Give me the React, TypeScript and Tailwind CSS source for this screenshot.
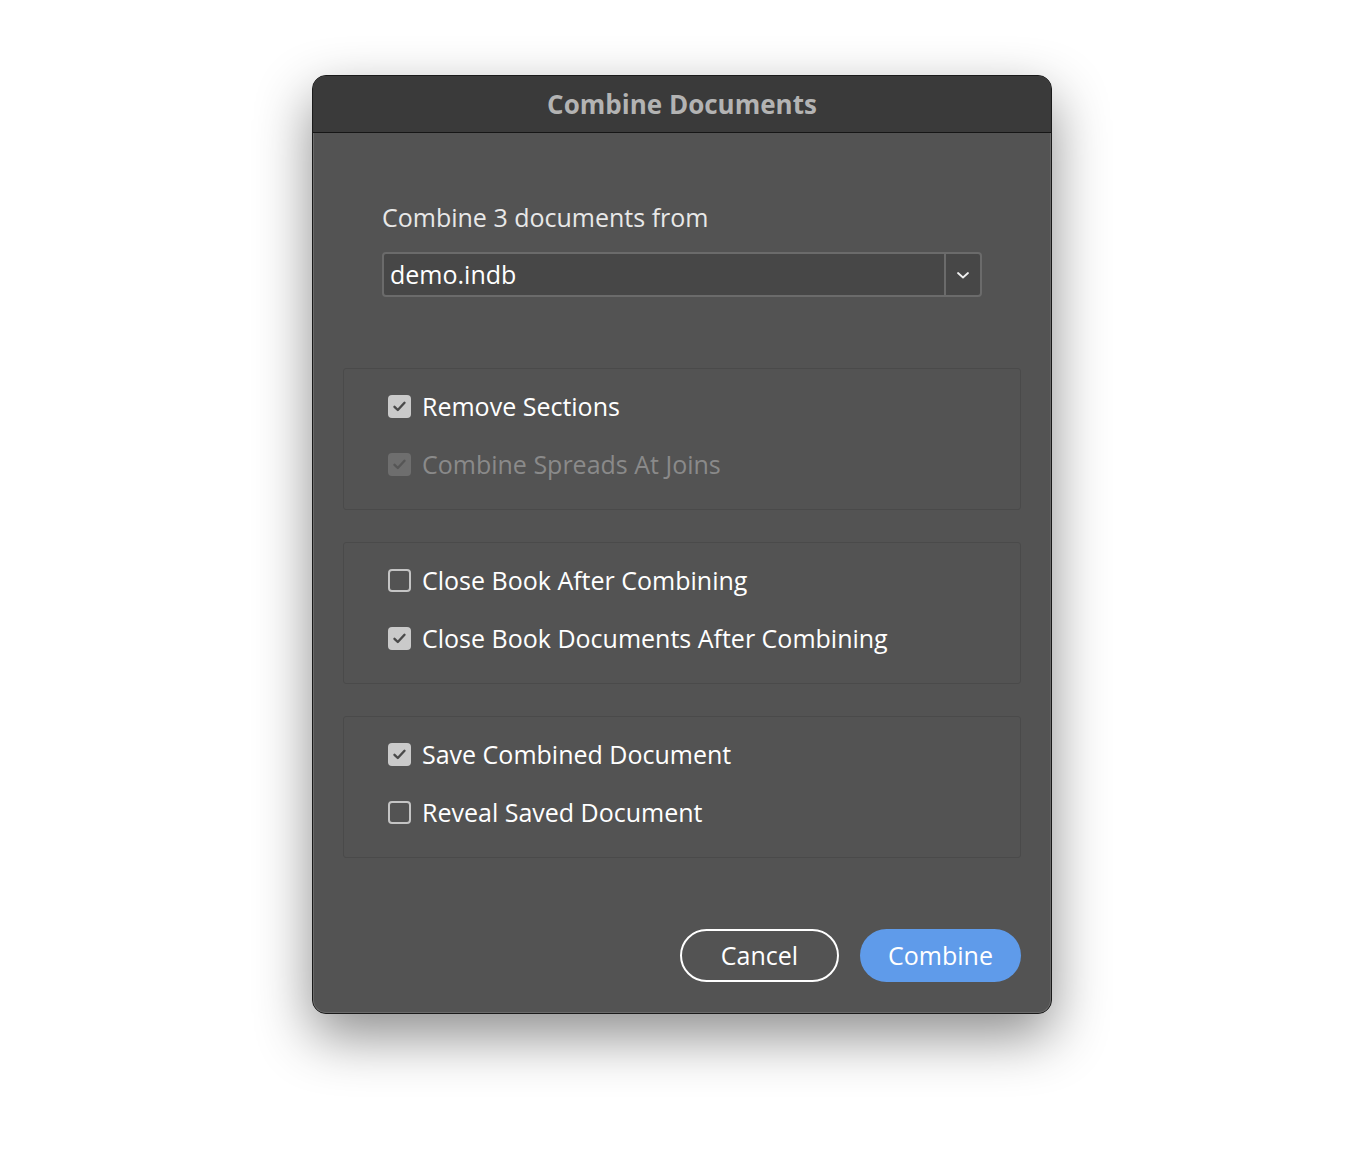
import React from "react";

const font = { fontFamily: '"Open Sans", "Noto Sans", sans-serif' };

function Check({ state }: { state: "on" | "off" | "disabled" }) {
  if (state === "off") {
    return <div className="w-[23px] h-[23px] rounded-[4px] border-2 border-[#c4c4c4] shrink-0" />;
  }
  const bg = state === "on" ? "bg-[#cacaca]" : "bg-[#6e6e6e]";
  const stroke = state === "on" ? "#4a4a4a" : "#565656";
  return (
    <div className={`w-[23px] h-[23px] rounded-[4px] ${bg} flex items-center justify-center shrink-0`}>
      <svg width="15" height="15" viewBox="0 0 15 15">
        <path d="M2.5 7.8 L5.8 11 L12.5 3.8" fill="none" stroke={stroke} strokeWidth="2.4" strokeLinecap="round" strokeLinejoin="round" />
      </svg>
    </div>
  );
}

function Row({ label, state }: { label: string; state: "on" | "off" | "disabled" }) {
  return (
    <div className="h-[30px] flex items-center gap-[11px]">
      <Check state={state} />
      <span className={`text-[25px] leading-[30px] ${state === "disabled" ? "text-[#8a8a8a]" : "text-white"}`}>{label}</span>
    </div>
  );
}

function Group({ children }: { children: React.ReactNode }) {
  return (
    <div className="h-[142px] border border-[#4a4a4a] rounded-[3px] pl-[44px] pt-[22px] flex flex-col gap-[28px]">
      {children}
    </div>
  );
}

export default function App() {
  return (
    <div className="w-full min-h-[1162px] bg-white flex justify-center pt-[75px]" style={font}>
      <div className="w-[740px] h-[939px] rounded-[14px] border border-[#1a1a1a] bg-[#535353] shadow-[0_22px_55px_rgba(0,0,0,0.45)] overflow-hidden flex flex-col">
        <div className="h-[57px] bg-[#3a3a3a] border-b border-[#161616] flex items-center justify-center shrink-0">
          <span className="text-[26px] font-bold text-[#b3b3b3]">Combine Documents</span>
        </div>
        <div className="flex-1 flex flex-col border-x border-b border-[#6a6a6a] rounded-b-[13px]">
          <div className="px-[68px] pt-[69px]">
            <div className="text-[25px] leading-[30px] text-[#e8e8e8]">Combine 3 documents from</div>
            <div className="mt-[20px] h-[45px] rounded-[4px] border-2 border-[#6b6b6b] bg-[#474747] flex items-stretch">
              <div className="flex-1 flex items-center pl-[6px] text-[25px] text-white">demo.indb</div>
              <div className="w-[36px] border-l-2 border-[#6b6b6b] flex items-center justify-center">
                <svg width="14" height="10" viewBox="0 0 14 10">
                  <path d="M2 3 L7 7.5 L12 3" fill="none" stroke="#f0f0f0" strokeWidth="1.8" strokeLinecap="round" strokeLinejoin="round" />
                </svg>
              </div>
            </div>
          </div>
          <div className="px-[29px] mt-[71px] flex flex-col gap-[32px]">
            <Group>
              <Row label="Remove Sections" state="on" />
              <Row label="Combine Spreads At Joins" state="disabled" />
            </Group>
            <Group>
              <Row label="Close Book After Combining" state="off" />
              <Row label="Close Book Documents After Combining" state="on" />
            </Group>
            <Group>
              <Row label="Save Combined Document" state="on" />
              <Row label="Reveal Saved Document" state="off" />
            </Group>
          </div>
          <div className="px-[29px] mt-[71px] flex justify-end gap-[21px]">
            <button className="w-[159px] h-[53px] rounded-full border-2 border-white text-white text-[25px]" style={font}>Cancel</button>
            <button className="w-[161px] h-[53px] rounded-full bg-[#5f9bea] text-white text-[25px]" style={font}>Combine</button>
          </div>
        </div>
      </div>
    </div>
  );
}
